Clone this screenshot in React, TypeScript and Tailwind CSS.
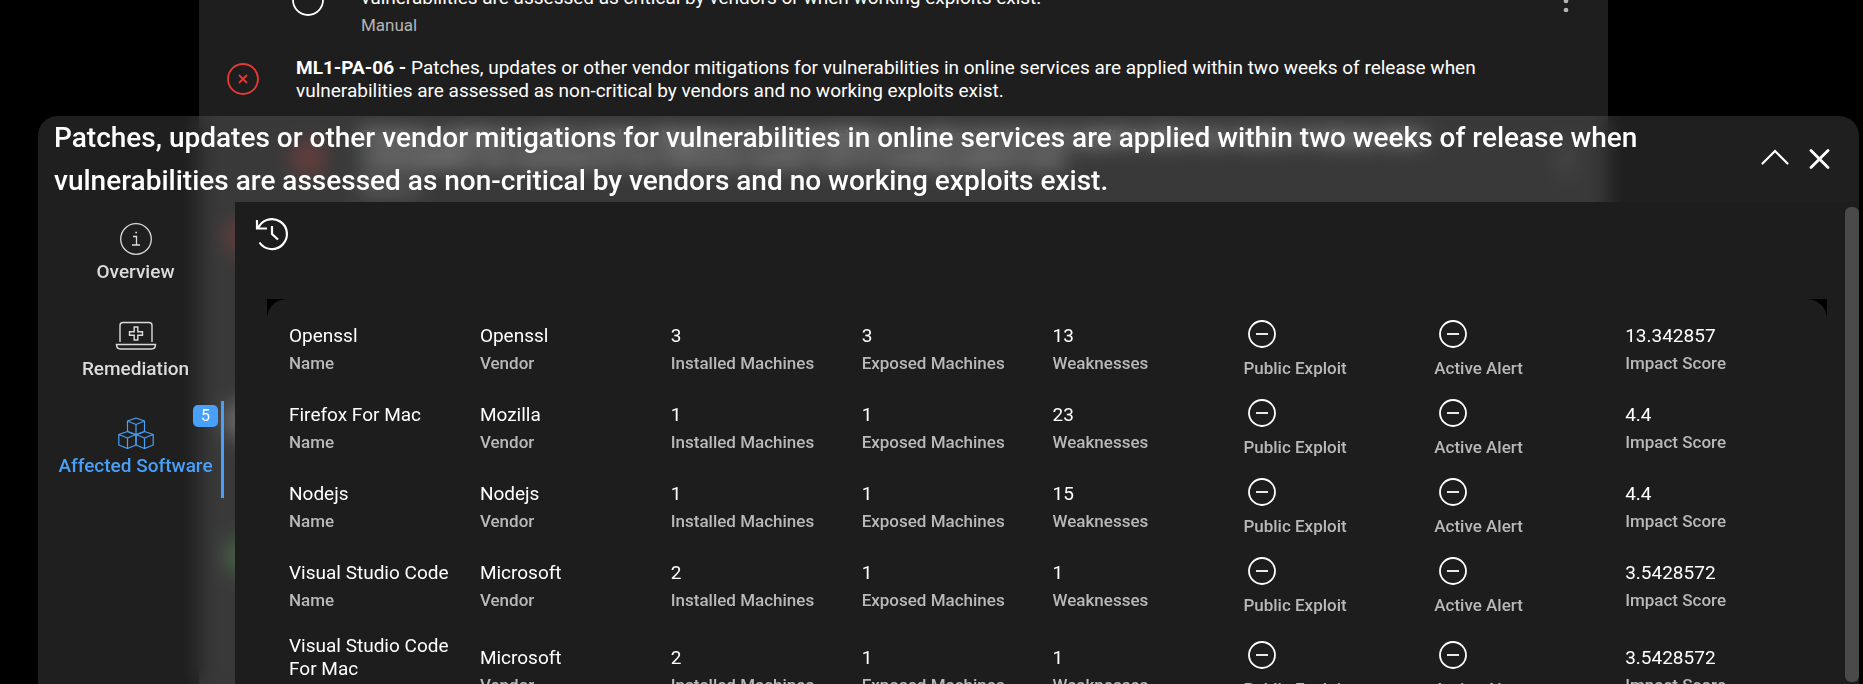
import { useState } from 'react';

type Software = {
  name: string;
  vendor: string;
  installed: number;
  exposed: number;
  weaknesses: number;
  score: string;
};

const requirement =
  'Patches, updates or other vendor mitigations for vulnerabilities in online services are applied within two weeks of release when vulnerabilities are assessed as non-critical by vendors and no working exploits exist.';

const software: Software[] = [
  { name: 'Openssl', vendor: 'Openssl', installed: 3, exposed: 3, weaknesses: 13, score: '13.342857' },
  { name: 'Firefox For Mac', vendor: 'Mozilla', installed: 1, exposed: 1, weaknesses: 23, score: '4.4' },
  { name: 'Nodejs', vendor: 'Nodejs', installed: 1, exposed: 1, weaknesses: 15, score: '4.4' },
  { name: 'Visual Studio Code', vendor: 'Microsoft', installed: 2, exposed: 1, weaknesses: 1, score: '3.5428572' },
  { name: 'Visual Studio Code For Mac', vendor: 'Microsoft', installed: 2, exposed: 1, weaknesses: 1, score: '3.5428572' },
];

function InfoIcon() {
  return (
    <svg className="h-8 w-9" viewBox="0 0 36 32" fill="none" stroke="currentColor" strokeWidth="1.3">
      <circle cx="18" cy="16" r="15.300" />
      <path d="M15 13.500h3.500v8.500M14 22h8M17.300 9.500h1.700" />
    </svg>
  );
}

function LaptopIcon() {
  return (
    <svg className="h-8 w-11" viewBox="0 0 44 32" fill="none" stroke="currentColor" strokeWidth="1.4">
      <path d="M6 22V5.500q0-3 3-3h26q3 0 3 3V22" />
      <path d="M20.200 7h3.600v4.700h4.700v3.600h-4.700V20h-3.600v-4.700h-4.700v-3.600h4.700z" />
      <path d="M2.500 24.500h39q0 4.500-4 4.500h-31q-4 0-4-4.500z" />
    </svg>
  );
}

function CubesIcon() {
  return (
    <svg className="h-8 w-9" viewBox="0 0 36 32" fill="none" stroke="currentColor" strokeWidth="1.2" strokeLinejoin="round">
      <path d="M18 1l8.500 3v10.500L18 18l-8.500-3.500V4zM9.500 4L18 7.500 26.500 4M18 7.500V18" />
      <path d="M9.500 14.500l8.500 3v10.500l-8.500 3.500L.8 28V17.500zM.8 17.500L9.500 21l8.500-3.500M9.500 21v10.500" />
      <path d="M26.500 14.500l8.700 3V28l-8.700 3.500L18 28V17.500zM18 17.500l8.500 3.500 8.700-3.500M26.500 21v10.500" />
    </svg>
  );
}

function HistoryIcon() {
  return (
    <svg className="h-9 w-9" viewBox="0 0 36 36" fill="none" stroke="currentColor" strokeWidth="2.200">
      <path d="M3 12.500A15 15 0 1 1 4.500 26.500" />
      <path d="M2 4v8.500h10" />
      <path d="M17 10v8l6 5.500" />
    </svg>
  );
}

function MinusCircle() {
  return (
    <svg className="ml-1 h-8 w-8" viewBox="0 0 32 32" fill="none" stroke="currentColor" strokeWidth="1.8">
      <circle cx="15" cy="14" r="13" />
      <path d="M9 14h12" />
    </svg>
  );
}

function StatusCircle({ failed, className }: { failed?: boolean; className: string }) {
  return (
    <svg className={`h-8 w-8 shrink-0 ${className}`} viewBox="0 0 32 32" fill="none" stroke="currentColor" strokeWidth="1.8">
      <circle cx="16" cy="16" r="15" />
      {failed && <path d="M12 12l8 8M20 12l-8 8" />}
    </svg>
  );
}

function Kebab() {
  return (
    <button type="button" aria-label="More" className="ml-auto mr-9 text-[#b4b4b4]">
      <svg className="h-6 w-3" viewBox="0 0 12 24" fill="currentColor">
        <circle cx="6" cy="4" r="2.300" />
        <circle cx="6" cy="13" r="2.300" />
        <circle cx="6" cy="22" r="2.300" />
      </svg>
    </button>
  );
}

function Cell({ label, children, icon }: { label: string; children: React.ReactNode; icon?: boolean }) {
  return (
    <td className="py-2 pr-6 align-middle">
      <div className={icon ? 'h-8' : 'text-[19px] leading-[23px]'}>{children}</div>
      <div className="mt-1 text-[17px] font-medium leading-6 text-[#b9b9b9]">{label}</div>
    </td>
  );
}

function Requirements() {
  return (
    <div className="mx-auto -mt-10 h-[724px] max-w-[1409px] overflow-hidden bg-[#1e1e1e] text-[19px] leading-[23px]">
      <div className="flex h-20 items-center pl-[93px]">
        <StatusCircle className="text-white" />
        <div className="ml-[37px] pt-[23px]">
          <p>vulnerabilities are assessed as critical by vendors or when working exploits exist.</p>
          <p className="mt-1 text-[17px] leading-6 text-[#b4b4b4]">Manual</p>
        </div>
        <Kebab />
      </div>
      <div className="flex h-[78px] items-center pl-7">
        <StatusCircle failed className="text-[#e53935]" />
        <p className="ml-[37px] max-w-[1200px]">
          <b className="font-bold">ML1-PA-06 - </b>
          {requirement}
        </p>
      </div>
      <div className="flex h-20 items-center pl-[93px]">
        <StatusCircle failed className="rounded-full bg-[#e53935]/10 text-[#e53935]" />
        <div className="ml-[37px] max-w-[1100px] pt-2">
          <p>{requirement}</p>
          <p className="mt-1 text-[17px] leading-6 text-[#b4b4b4]">Manual</p>
        </div>
        <Kebab />
      </div>
      <div className="flex flex-col pl-7">
        <StatusCircle failed className="mt-[23px] rounded-full bg-[#e53935]/10 text-[#e53935]" />
        <StatusCircle className="mt-[151px] rounded-full bg-white/20 text-white" />
        <StatusCircle className="mt-[104px] rounded-full bg-[#4caf50]/30 text-[#4caf50]" />
      </div>
    </div>
  );
}

export default function App() {
  const [tab, setTab] = useState('Affected Software');
  const tabs = [
    { name: 'Overview', icon: <InfoIcon /> },
    { name: 'Remediation', icon: <LaptopIcon /> },
    { name: 'Affected Software', icon: <CubesIcon />, count: software.length },
  ];

  return (
    <div className="relative h-screen overflow-hidden bg-black font-['Roboto',sans-serif] text-white">
      <div className="pr-14">
        <Requirements />
      </div>

      <div
        role="dialog"
        aria-label="Requirement details"
        className="absolute bottom-0 left-[38px] right-1 top-[116px] flex flex-col overflow-hidden rounded-t-[20px] bg-white/12 backdrop-blur-[10px]"
      >
        <header className="flex h-[86px] shrink-0 items-center pl-4 pr-6">
          <h1 className="max-w-[1640px] text-[28px] font-medium leading-[43px]">{requirement}</h1>
          <div className="ml-auto flex items-center gap-3">
            <button type="button" aria-label="Collapse">
              <svg className="h-8 w-8" viewBox="0 0 32 32" fill="none" stroke="currentColor" strokeWidth="2.200" strokeLinecap="round">
                <path d="M3.500 20.500L16 8l12.500 12.500" />
              </svg>
            </button>
            <button type="button" aria-label="Close">
              <svg className="h-8 w-8" viewBox="0 0 32 32" fill="none" stroke="currentColor" strokeWidth="2.800" strokeLinecap="round">
                <path d="M8 7.500l17 17M25 7.500l-17 17" />
              </svg>
            </button>
          </div>
        </header>

        <div className="flex min-h-0 flex-1">
          <nav className="w-[197px] shrink-0 pr-[11px] pt-[5px]">
            {tabs.map((t) => (
              <button
                key={t.name}
                type="button"
                onClick={() => setTab(t.name)}
                className={
                  tab === t.name
                    ? 'relative flex h-[97px] w-full flex-col items-center border-r-[3px] border-[#48a0f8] pl-3 pt-4 text-[#48a0f8]'
                    : 'relative flex h-[97px] w-full flex-col items-center pl-3 pr-[3px] pt-4 text-[#dcdcdc]'
                }
              >
                {t.icon}
                <span className="mt-[5px] whitespace-nowrap text-[19px] font-medium leading-6">{t.name}</span>
                {t.count && (
                  <span className="absolute right-[3px] top-1 rounded-[5px] bg-[#48a0f8] px-2 text-base leading-[22px] text-white">
                    {t.count}
                  </span>
                )}
              </button>
            ))}
          </nav>

          <main className="flex min-w-0 flex-1 bg-[#1d1d1d]">
            <div className="min-w-0 flex-1 pl-8 pr-[18px]">
              <button type="button" aria-label="History" className="-ml-3 mt-3.5 block">
                <HistoryIcon />
              </button>
              <div className="mt-[47px] bg-black">
                <div className="rounded-t-[20px] bg-[#1d1d1d] pl-[22px] pr-[11px] pt-[11px]">
                  <table className="w-full table-fixed text-left">
                    <tbody>
                      {software.map((s) => (
                        <tr key={s.name} className="h-[79px]">
                          <Cell label="Name">{s.name}</Cell>
                          <Cell label="Vendor">{s.vendor}</Cell>
                          <Cell label="Installed Machines">{s.installed}</Cell>
                          <Cell label="Exposed Machines">{s.exposed}</Cell>
                          <Cell label="Weaknesses">{s.weaknesses}</Cell>
                          <Cell label="Public Exploit" icon>
                            <MinusCircle />
                          </Cell>
                          <Cell label="Active Alert" icon>
                            <MinusCircle />
                          </Cell>
                          <Cell label="Impact Score">{s.score}</Cell>
                        </tr>
                      ))}
                    </tbody>
                  </table>
                </div>
              </div>
            </div>
            <div className="mb-0.5 mt-[5px] w-3.5 shrink-0 rounded-md bg-[#4a4a4a]" />
          </main>
        </div>
      </div>
    </div>
  );
}
